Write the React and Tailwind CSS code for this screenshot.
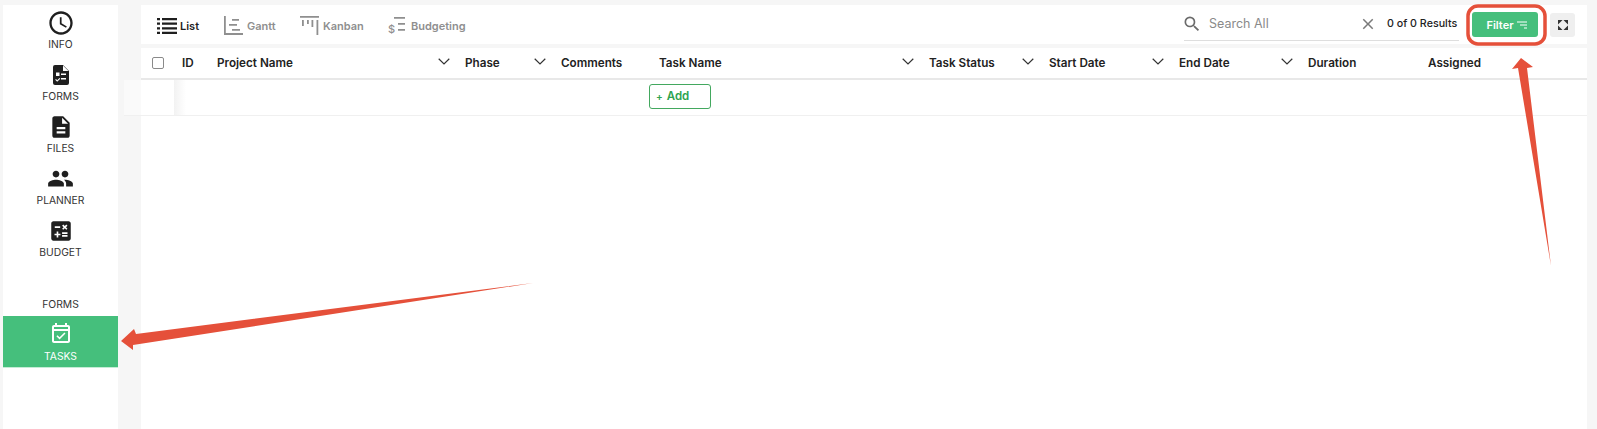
import React from "react";
import { MdAccessTime, MdDescription, MdPeople, MdCalculate, MdOutlineEventAvailable, MdSearch, MdClose } from "react-icons/md";

const FormsIcon = () => (
  <svg viewBox="0 0 24 24" className="w-[24px] h-[24px]" fill="#1f1f1f">
    <path d="M6 2h8l6 6v12a2 2 0 0 1-2 2H6a2 2 0 0 1-2-2V4a2 2 0 0 1 2-2z" />
    <path d="M14 2.500V8h5.500z" fill="#fff" />
    <path d="M7 9.500h3.500V13H7zM12 10.500h5v1.400h-5zM12 15h5v1.400h-5zM7 16l1.200 1.200L10.500 15l.8.8-3.100 3L6.200 16.800z" fill="#fff" />
  </svg>
);

const navItems = [
  { label: "INFO", icon: <MdAccessTime size={28} color="#1f1f1f" /> },
  { label: "FORMS", icon: <FormsIcon /> },
  { label: "FILES", icon: <MdDescription size={26} color="#1f1f1f" /> },
  { label: "PLANNER", icon: <MdPeople size={27} color="#1f1f1f" /> },
  { label: "BUDGET", icon: <MdCalculate size={26} color="#1f1f1f" /> },
];

const ListIcon = () => (
  <svg viewBox="0 0 20 18" className="w-[20px] h-[18px]" fill="#1f1f1f">
    <path d="M0 1h3v2.200H0zM5 1h15v2.200H5zM0 5.600h3v2.200H0zM5 5.600h15v2.200H5zM0 10.200h3v2.200H0zM5 10.200h15v2.200H5zM0 14.800h3V17H0zM5 14.800h15V17H5z" />
  </svg>
);
const GanttIcon = () => (
  <svg viewBox="0 0 19 19" className="w-[19px] h-[19px]" fill="#8f8f8f">
    <path d="M0 0h1.800v17H19v2H0zM8 3h7v1.800H8zM5 8h8v1.800H5zM8 13h8v1.800H8z" />
  </svg>
);
const KanbanIcon = () => (
  <svg viewBox="0 0 19 19" className="w-[19px] h-[19px]" fill="#8f8f8f">
    <path d="M0 0h19v1.800H0zM2 4h1.800v6H2zM7 4h1.800v4H7zM11.500 4h1.800v7h-1.800zM16.500 4h1.800v15h-1.800z" />
  </svg>
);
const BudgetIcon = () => (
  <svg viewBox="0 0 18 19" className="w-[18px] h-[19px]" fill="#8f8f8f">
    <text x="0" y="16.500" fontSize="11" fontFamily="Inter, sans-serif" fontWeight="500">$</text>
    <path d="M6 1h11v1.800H6zM10 7h7v1.800h-7zM10 13h7v1.800h-7z" />
  </svg>
);
const Chevron = () => (
  <svg viewBox="0 0 12 7" className="w-[12px] h-[7px] -mt-[3px]" fill="none" stroke="#333" strokeWidth="1.200">
    <path d="M.7.8 6 6l5.300-5.200" />
  </svg>
);

const Tab = ({ icon, label, active, w, gap }) => (
  <div className={`flex items-center ${gap} ${w}`}>
    {icon}
    <span className={`text-[11px] font-semibold mt-[1px] ${active ? "text-[#1f1f1f]" : "text-[#8f8f8f]"}`}>{label}</span>
  </div>
);

const columns = [
  { label: "ID", w: "w-[35px]" },
  { label: "Project Name", w: "w-[248px]", chev: true },
  { label: "Phase", w: "w-[96px]", chev: true },
  { label: "Comments", w: "w-[98px]" },
  { label: "Task Name", w: "w-[270px]", chev: true },
  { label: "Task Status", w: "w-[120px]", chev: true },
  { label: "Start Date", w: "w-[130px]", chev: true },
  { label: "End Date", w: "w-[129px]", chev: true },
  { label: "Duration", w: "w-[120px]" },
  { label: "Assigned", w: "w-[167px]" },
];

export default function App() {
  return (
    <div className="relative h-[429px] w-[1597px] overflow-hidden bg-[#f6f6f6] flex pt-[5px] pl-[3px] font-['Inter',sans-serif] text-[#1f1f1f]">
      <aside className="w-[115px] bg-white flex flex-col items-stretch shrink-0 pt-[3px]">
        {navItems.map((n) => (
          <div key={n.label} className="h-[52px] flex flex-col items-center justify-start">
            <div className="h-[29px] flex items-center justify-center">{n.icon}</div>
            <span className="text-[10.300px] leading-[14px] text-[#333]">{n.label}</span>
          </div>
        ))}
        <div className="h-[48px] flex items-end justify-center pb-[5px]">
          <span className="text-[10.300px] leading-[14px] text-[#333]">FORMS</span>
        </div>
        <div className="h-[52px] bg-[#45bf7c] flex flex-col items-center pt-[6px] border-b border-[#c4ecd5]">
          <MdOutlineEventAvailable size={24} color="#fff" />
          <span className="text-[10.300px] leading-[14px] mt-[3px] text-white">TASKS</span>
        </div>
      </aside>

      <main className="ml-[23px] w-[1446px] shrink-0 flex flex-col">
        <div className="h-[39px] bg-white flex items-center pl-[16px] shrink-0">
          <div className="flex items-center pt-[2px]">
            <Tab icon={<ListIcon />} label="List" active gap="gap-[3px]" w="w-[67px]" />
            <Tab icon={<GanttIcon />} label="Gantt" gap="gap-[4px]" w="w-[76px]" />
            <Tab icon={<KanbanIcon />} label="Kanban" gap="gap-[4px]" w="w-[88px]" />
            <Tab icon={<BudgetIcon />} label="Budgeting" gap="gap-[5px]" w="w-[90px]" />
          </div>
          <div className="ml-auto flex items-center mr-[12px]">
            <div className="w-[275px] h-[28px] mt-[5px] border-b border-[#dedede] flex items-center pb-[5px] -ml-[4px]">
              <MdSearch size={20} color="#6b6b6b" className="shrink-0 -ml-[2px]" />
              <span className="ml-[7px] text-[12.500px] text-[#8a8a8a] whitespace-nowrap w-[138px]">Search All</span>
              <MdClose size={18} color="#7a7a7a" className="shrink-0 ml-[12px]" />
              <span className="ml-[10px] text-[10.700px] font-medium text-[#222] whitespace-nowrap">0 of 0 Results</span>
            </div>
            <button className="ml-[13px] w-[66px] h-[25px] pl-[3px] pt-[1px] rounded-[3px] bg-[#45bf7c] text-white text-[11px] font-semibold flex items-center justify-center gap-[3px]">
              Filter
              <svg viewBox="0 0 10 8" className="w-[10px] h-[8px]" fill="none" stroke="#fff" strokeWidth="1">
                <path d="M0 1h10M3 4h7M7 7h3" />
              </svg>
            </button>
            <div className="ml-[12px] w-[25px] h-[24px] rounded-[3px] bg-[#efefef] flex items-center justify-center">
              <svg viewBox="0 0 12 12" className="w-[10px] h-[10px]" fill="none" stroke="#333" strokeWidth="1.600">
                <path d="M.8 3.500V.8h2.700L.8 3.500zM11.200 3.500V.8H8.500l2.700 2.700zM.8 8.500v2.700h2.700L.8 8.500zM11.200 8.500v2.700H8.500l2.700-2.700z" />
              </svg>
            </div>
          </div>
        </div>

        <div className="h-[4px] shrink-0" />

        <div className="h-[32px] bg-white flex items-center border-b-2 border-[#e8e8e8] shrink-0 pt-[1px]">
          <div className="w-[33px] flex justify-center">
            <div className="w-[12px] h-[12px] rounded-[2px] border border-[#8a8a8a] bg-white -mt-[1px]" />
          </div>
          {columns.map((c) => (
            <div key={c.label} className={`${c.w} shrink-0 flex items-center justify-between pl-[8px] pr-[7px]`}>
              <span className="text-[11.700px] font-semibold text-[#222] whitespace-nowrap">{c.label}</span>
              {c.chev && <Chevron />}
            </div>
          ))}
        </div>

        <div className="h-[36px] bg-white flex border-b border-[#f0f0f0] shrink-0 -ml-[17px]">
          <div className="w-[17px] bg-[#fafafa]" />
          <div className="w-[33px] bg-white" />
          <div className="w-[12px] bg-gradient-to-r from-[#f2f2f2] to-white" />
          <div className="ml-[463px] mt-[4px] w-[62px] h-[25px] rounded-[3px] border border-[#43a85f] flex items-center pl-[6px] gap-[4px] text-[11.500px] font-semibold text-[#2ea44f]">
            <span className="text-[10px]">+</span>
            <span>Add</span>
          </div>
        </div>

        <div className="flex-1 bg-white" />
      </main>

      <svg className="absolute left-0 top-0 pointer-events-none" width="1597" height="429" viewBox="0 0 1597 429">
        <rect x="1468" y="6" width="77" height="38" rx="10" fill="none" stroke="#e5503a" strokeWidth="3.500" />
        <path d="M533 283 L136 334 L134 329 L121 341 L133 350 L133 345 Z" fill="#e5503a" />
        <path d="M1551 266 L1527 68 L1533 67 L1521 58 L1512 69 L1518 68 Z" fill="#e5503a" />
      </svg>
    </div>
  );
}
